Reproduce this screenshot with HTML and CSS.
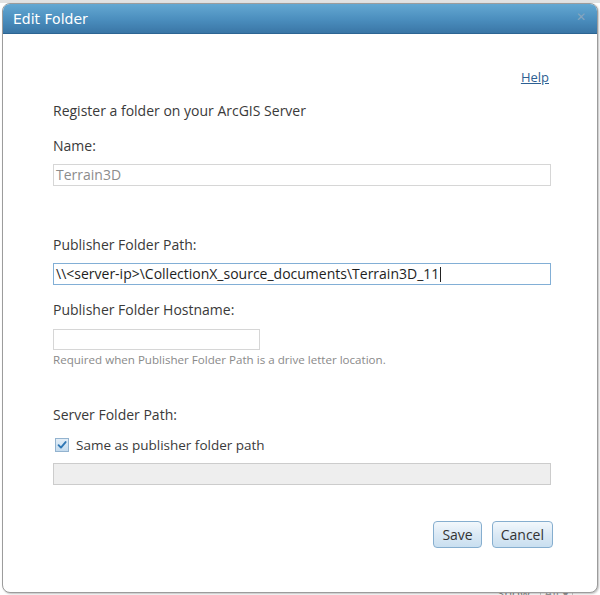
FILE: index.html
```html
<!DOCTYPE html>
<html>
<head>
<meta charset="utf-8">
<link rel="stylesheet" href="styles.css">
</head>
<body>
<div class="page-bg">
  <div class="bg-show">Show : <span class="bg-all">All ▾</span></div>
</div>
<div class="dialog">
  <div class="titlebar">
    <span class="title">Edit Folder</span>
    <span class="close">✕</span>
  </div>
  <div class="content">
    <div class="help-row"><a class="help" href="#">Help</a></div>
    <div class="intro">Register a folder on your ArcGIS Server</div>
    <div class="label first">Name:</div>
    <div class="field readonly">Terrain3D</div>
    <div class="label big-gap">Publisher Folder Path:</div>
    <div class="field focused">\\&lt;server-ip&gt;\CollectionX_source_documents\Terrain3D_11<span class="caret"></span></div>
    <div class="label mid-gap">Publisher Folder Hostname:</div>
    <div class="field short"></div>
    <div class="hint">Required when Publisher Folder Path is a drive letter location.</div>
    <div class="label server-gap">Server Folder Path:</div>
    <div class="check-row">
      <span class="checkbox">
        <svg width="14" height="14" viewBox="0 0 14 14">
          <path d="M3 7.2 L5.8 10 L11.2 3.6" fill="none" stroke="#2f77b5" stroke-width="2.2" stroke-linecap="round" stroke-linejoin="round"/>
        </svg>
      </span>
      <span class="check-label">Same as publisher folder path</span>
    </div>
    <div class="field disabled"></div>
    <div class="buttons">
      <button class="btn">Save</button>
      <button class="btn">Cancel</button>
    </div>
  </div>
</div>
</body>
</html>
```
FILE: styles.css
```css
html, body {
  margin: 0;
  padding: 0;
}
body {
  width: 600px;
  height: 595px;
  overflow: hidden;
  background: #ffffff;
  font-family: "Open Sans", "DejaVu Sans", sans-serif;
  position: relative;
}
.page-bg {
  position: absolute;
  left: 0;
  top: 0;
  width: 600px;
  height: 595px;
  background: linear-gradient(to bottom, #e2e2e2 0, #e2e2e2 3px, #ffffff 3px);
  z-index: 0;
}
.bg-show {
  position: absolute;
  left: 497px;
  top: 584px;
  font-size: 13px;
  color: #8a8a8a;
}
.bg-all {
  border: 1px solid #cfcfcf;
  padding: 0 3px;
  color: #9a9a9a;
}
.dialog {
  position: relative;
  z-index: 1;
  margin: 3px 0 0 2px;
  width: 596px;
  height: 590px;
  box-sizing: border-box;
  border: 1px solid #9c9c9c;
  border-radius: 8px;
  background: #ffffff;
  box-shadow: 1px 1px 2px rgba(0,0,0,0.25);
  overflow: hidden;
  display: flex;
  flex-direction: column;
}
.titlebar {
  height: 30px;
  flex: none;
  box-sizing: border-box;
  background: linear-gradient(to bottom, #64a8d2 0%, #4a8dbd 55%, #3a76a6 100%);
  border-bottom: 1px solid #2c6593;
  display: flex;
  align-items: center;
  justify-content: space-between;
  padding: 0 10px 0 10px;
}
.title {
  color: #ffffff;
  font-size: 14px;
  font-family: "DejaVu Sans", "Open Sans", sans-serif;
}
.close {
  color: #86a5bd;
  font-size: 12px;
  font-weight: bold;
  margin-top: -4px;
  margin-right: 1px;
}
.content {
  padding: 35px 46px 0 50px;
  color: #3a3a3a;
  font-size: 14px;
  line-height: 16px;
}
.help-row {
  display: flex;
  justify-content: flex-end;
  padding-right: 2px;
}
.help {
  color: #2d5f92;
  text-decoration: underline;
  font-size: 13px;
}
.intro {
  margin-top: 18px;
}
.label.first {
  margin-top: 19px;
}
.label {
  margin-bottom: 10px;
}
.big-gap {
  margin-top: 51px;
}
.mid-gap {
  margin-top: 17px;
  margin-bottom: 11px;
}
.server-gap {
  margin-top: 40px;
  margin-bottom: 14px;
}
.field {
  height: 22px;
  box-sizing: border-box;
  border: 1px solid #d6d6d6;
  background: #ffffff;
  padding: 0 2px;
  line-height: 20px;
  font-size: 14px;
  color: #222;
  white-space: nowrap;
}
.field.readonly {
  color: #8c8c8c;
}
.field.focused {
  border-color: #82afd6;
  color: #1e1e1e;
}
.caret {
  display: inline-block;
  width: 1px;
  height: 15px;
  background: #222;
  vertical-align: -3px;
  margin-left: 1px;
}
.field.short {
  width: 207px;
  height: 21px;
}
.field.disabled {
  background: #eeeeee;
  border-color: #cccccc;
}
.hint {
  margin-top: 3px;
  font-size: 11.6px;
  line-height: 14px;
  color: #8a8a8a;
}
.check-row {
  display: flex;
  align-items: center;
  height: 16px;
  margin-bottom: 10px;
}
.checkbox {
  width: 14px;
  height: 14px;
  box-sizing: border-box;
  border: 1px solid #93b3cf;
  background: linear-gradient(to bottom, #e3eef7, #c4dbee);
  margin-left: 2px;
  margin-right: 7px;
  display: flex;
  align-items: center;
  justify-content: center;
}
.checkbox svg {
  width: 12px;
  height: 12px;
}
.check-label {
  font-size: 13.5px;
}
.buttons {
  margin-top: 36px;
  margin-right: -2px;
  display: flex;
  justify-content: flex-end;
  gap: 10px;
}
.btn {
  height: 27px;
  box-sizing: border-box;
  padding: 0 8px;
  border: 1px solid #86aecf;
  border-radius: 4px;
  background: linear-gradient(to bottom, #f3f8fc 0%, #dbe9f5 50%, #c9dff0 100%);
  color: #333;
  font-family: "Open Sans", "DejaVu Sans", sans-serif;
  font-size: 14px;
}
```
